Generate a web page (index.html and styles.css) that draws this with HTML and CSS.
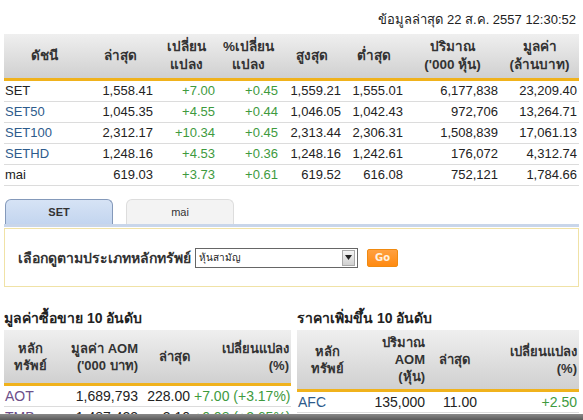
FILE: index.html
```html
<!DOCTYPE html>
<html lang="th">
<head>
<meta charset="utf-8">
<link rel="stylesheet" href="styles.css">
</head>
<body>
<div class="page">
  <div class="updated">ข้อมูลล่าสุด 22 ส.ค. 2557 12:30:52</div>
  <table class="idx">
    <colgroup>
      <col class="c1"><col class="c2"><col class="c3"><col class="c4"><col class="c5"><col class="c6"><col class="c7"><col class="c8">
    </colgroup>
    <thead>
      <tr>
        <th>ดัชนี</th><th>ล่าสุด</th><th>เปลี่ยน<br>แปลง</th><th>%เปลี่ยน<br>แปลง</th><th>สูงสุด</th><th>ต่ำสุด</th><th>ปริมาณ<br>('000 หุ้น)</th><th>มูลค่า<br>(ล้านบาท)</th>
      </tr>
    </thead>
    <tbody>
      <tr><td class="name">SET</td><td>1,558.41</td><td class="up">+7.00</td><td class="up">+0.45</td><td>1,559.21</td><td>1,555.01</td><td>6,177,838</td><td>23,209.40</td></tr>
      <tr><td class="name link">SET50</td><td>1,045.35</td><td class="up">+4.55</td><td class="up">+0.44</td><td>1,046.05</td><td>1,042.43</td><td>972,706</td><td>13,264.71</td></tr>
      <tr><td class="name link">SET100</td><td>2,312.17</td><td class="up">+10.34</td><td class="up">+0.45</td><td>2,313.44</td><td>2,306.31</td><td>1,508,839</td><td>17,061.13</td></tr>
      <tr><td class="name link">SETHD</td><td>1,248.16</td><td class="up">+4.53</td><td class="up">+0.36</td><td>1,248.16</td><td>1,242.61</td><td>176,072</td><td>4,312.74</td></tr>
      <tr><td class="name">mai</td><td>619.03</td><td class="up">+3.73</td><td class="up">+0.61</td><td>619.52</td><td>616.08</td><td>752,121</td><td>1,784.66</td></tr>
    </tbody>
  </table>

  <div class="tabs">
    <div class="tab active">SET</div>
    <div class="tab">mai</div>
  </div>
  <div class="filter">
    <span class="filter-label">เลือกดูตามประเภทหลักทรัพย์</span>
    <div class="select"><span class="select-text">หุ้นสามัญ</span><span class="select-arrow"><svg width="7" height="5" viewBox="0 0 7 5"><path d="M0 0h7L3.5 5z" fill="#222"/></svg></span></div>
    <button class="go">Go</button>
  </div>

  <div class="tops">
    <div class="top-box left">
      <div class="top-title">มูลค่าซื้อขาย 10 อันดับ</div>
      <table class="top">
        <colgroup><col class="l1"><col class="l2"><col class="l3"><col class="l4"></colgroup>
        <thead>
          <tr><th class="ctr">หลัก<br>ทรัพย์</th><th>มูลค่า AOM<br>('000 บาท)</th><th>ล่าสุด</th><th>เปลี่ยนแปลง<br>(%)</th></tr>
        </thead>
        <tbody>
          <tr><td class="name visited">AOT</td><td>1,689,793</td><td>228.00</td><td class="up">+7.00 (+3.17%)</td></tr>
          <tr><td class="name visited">TMB</td><td>1,487,423</td><td>3.10</td><td class="up">+0.08 (+2.65%)</td></tr>
        </tbody>
      </table>
    </div>
    <div class="top-box right">
      <div class="top-title">ราคาเพิ่มขึ้น 10 อันดับ</div>
      <table class="top">
        <colgroup><col class="r1"><col class="r2"><col class="r3"><col class="r4"></colgroup>
        <thead>
          <tr><th class="ctr">หลัก<br>ทรัพย์</th><th>ปริมาณ<br>AOM<br>(หุ้น)</th><th class="ctr">ล่าสุด</th><th>เปลี่ยนแปลง<br>(%)</th></tr>
        </thead>
        <tbody>
          <tr><td class="name link">AFC</td><td>135,000</td><td class="lft">11.00</td><td class="up">+2.50</td></tr>
          <tr><td class="name link">TTL</td><td>1,200</td><td class="lft">2.60</td><td class="up">+2.00</td></tr>
        </tbody>
      </table>
    </div>
  </div>
</div>
<div class="shade"></div>
</body>
</html>
```

FILE: styles.css
```css
html, body {
  margin: 0;
  padding: 0;
  background: #fff;
  overflow: hidden;
  height: 420px;
}
body {
  font-family: Tahoma, "Liberation Sans", "Noto Sans", sans-serif;
  font-size: 13px;
  color: #222;
}
.page {
  padding: 0 4px;
}
.updated {
  text-align: right;
  padding: 12px 3px 0 0;
  height: 22px;
  line-height: 16px;
  color: #222;
}
table {
  border-collapse: collapse;
  table-layout: fixed;
  width: 100%;
}
.idx col.c1 { width: 81px; }
.idx col.c2 { width: 70px; }
.idx col.c3 { width: 62px; }
.idx col.c4 { width: 63px; }
.idx col.c5 { width: 63px; }
.idx col.c6 { width: 62px; }
.idx col.c7 { width: 95px; }
.idx col.c8 { width: 79px; }
th {
  background: linear-gradient(#efefef, #d0d0d0);
  font-weight: bold;
  color: #333;
  line-height: 18px;
  border-bottom: 3px solid #f0b21c;
  padding: 0 2px;
}
.idx th {
  height: 44px;
  text-align: center;
  font-size: 13.5px;
}
td {
  text-align: right;
  padding: 0 2px;
  height: 20px;
  line-height: 20px;
  border-bottom: 1px solid #dcdcdc;
  white-space: nowrap;
}
td.name { text-align: left; padding-left: 1px; }
td.link { color: #2d5b8c; }
td.visited { color: #6c4f8a; }
td.up { color: #3e9a3e; }
td.lft { text-align: left; padding-left: 16px; }

.tabs {
  display: flex;
  gap: 13px;
  margin-top: 13px;
  padding-left: 1px;
  border-bottom: 3px solid #c9d6ea;
}
.tab {
  width: 106px;
  height: 24px;
  line-height: 24px;
  text-align: center;
  font-size: 11px;
  border: 1px solid #dddddd;
  border-bottom: none;
  border-radius: 6px 6px 0 0;
  background: #f3f3f3;
  color: #333;
}
.tab.active {
  background: linear-gradient(#d6e3f5, #c3d5ef);
  border-color: #8499ba;
  font-weight: bold;
}
.filter {
  display: flex;
  align-items: center;
  height: 57px;
  border: 1px solid #f0e2a6;
  padding-left: 13px;
  margin-top: 1px;
}
.filter-label {
  font-weight: bold;
  font-size: 14px;
  color: #333;
  margin-right: 4px;
}
.select {
  display: flex;
  align-items: center;
  width: 161px;
  height: 18px;
  border: 1px solid #666;
  background: #fff;
}
.select-text {
  flex: 1;
  font-size: 10px;
  padding-left: 3px;
}
.select-arrow {
  width: 11px;
  height: 14px;
  margin-right: 2px;
  background: linear-gradient(#f4f4f4, #d0d0d0);
  border: 1px solid #aaa;
  display: flex;
  align-items: center;
  justify-content: center;
}
.go {
  margin-left: 9px;
  width: 31px;
  height: 18px;
  border: 1px solid #f08a10;
  border-radius: 2px;
  background: linear-gradient(#ffa040, #ff8a10);
  color: #fff2e0;
  font-family: "DejaVu Sans", sans-serif;
  font-size: 10px;
  font-weight: bold;
  padding: 0;
}

.tops {
  display: flex;
  gap: 6px;
  margin-top: 22px;
}
.top-box.left { width: 287px; }
.top-box.right { flex: 1; }
.top-title {
  font-weight: bold;
  font-size: 14px;
  color: #222;
  height: 20px;
  line-height: 18px;
  margin-bottom: 1px;
}
.top th {
  text-align: right;
  vertical-align: middle;
  line-height: 17px;
  font-size: 13px;
}
.top th.ctr { text-align: center; }
.left .top th { height: 53px; }
.right .top th { height: 59px; }
.top td { height: 20px; line-height: 20px; font-size: 14px; }
.left col.l1 { width: 52px; }
.left col.l2 { width: 84px; }
.left col.l3 { width: 52px; }
.left col.l4 { width: 99px; }
.right col.r1 { width: 60px; }
.right col.r2 { width: 70px; }
.right col.r3 { width: 55px; }
.right col.r4 { width: 97px; }

.shade {
  position: fixed;
  left: 0;
  right: 0;
  bottom: 0;
  height: 6px;
  background: linear-gradient(#8a8a8a, #5a5a5a);
}
```
